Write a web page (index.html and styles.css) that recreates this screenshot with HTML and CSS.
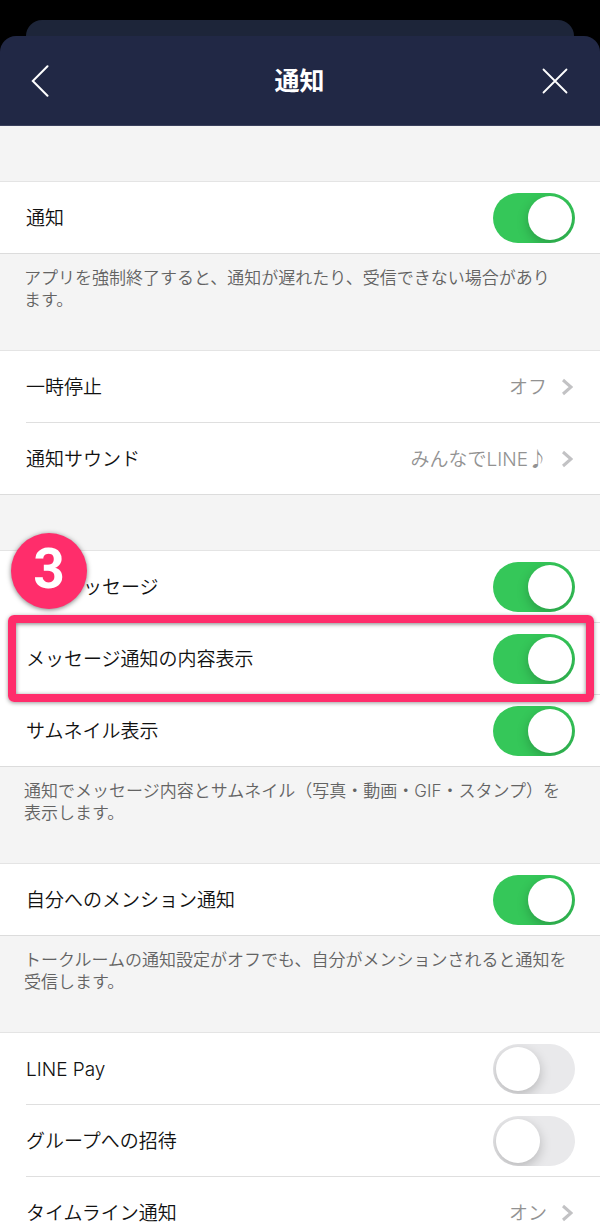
FILE: index.html
```
<!DOCTYPE html>
<html lang="ja">
<head>
  <meta charset="UTF-8" />
  <meta name="viewport" content="width=device-width, initial-scale=1.0"/>
  <title>通知</title>
  <link rel="stylesheet" href="styles.css">
</head>
<body>
  <div class="back-sheet"></div>

  <header>
    <button class="icon-btn" aria-label="戻る">
      <svg width="18" height="32" viewBox="0 0 18 32"><path d="M16.5 1.2 L1.8 16 L16.5 30.8"/></svg>
    </button>
    <h1>通知</h1>
    <button class="icon-btn close" aria-label="閉じる">
      <svg width="26" height="26" viewBox="0 0 26 26"><path d="M1.5 1.5 L24.5 24.5 M24.5 1.5 L1.5 24.5"/></svg>
    </button>
  </header>

  <main>
    <div class="spacer"></div>

    <section class="group">
      <div class="row">
        <label for="notify">通知</label>
        <input type="checkbox" class="switch" id="notify" checked>
      </div>
    </section>
    <p class="note">アプリを強制終了すると、通知が遅れたり、受信できない場合があり<br>ます。</p>

    <section class="group">
      <a class="row" href="#pause">
        <span>一時停止</span>
        <span class="value">オフ</span>
        <svg class="chevron" width="12" height="18" viewBox="0 0 12 18"><path d="M2 2 L10 9 L2 16"/></svg>
      </a>
      <a class="row" href="#sound">
        <span>通知サウンド</span>
        <span class="value">みんなでLINE♪</span>
        <svg class="chevron" width="12" height="18" viewBox="0 0 12 18"><path d="M2 2 L10 9 L2 16"/></svg>
      </a>
    </section>
    <div class="spacer"></div>

    <section class="group">
      <div class="row">
        <label for="message">新規メッセージ</label>
        <input type="checkbox" class="switch" id="message" checked>
      </div>
      <div class="row">
        <label for="preview">メッセージ通知の内容表示</label>
        <input type="checkbox" class="switch" id="preview" checked>
      </div>
      <div class="row">
        <label for="thumbnail">サムネイル表示</label>
        <input type="checkbox" class="switch" id="thumbnail" checked>
      </div>
      <div class="highlight"></div>
      <div class="step">3</div>
    </section>
    <p class="note">通知でメッセージ内容とサムネイル（写真・動画・GIF・スタンプ）を<br>表示します。</p>

    <section class="group">
      <div class="row">
        <label for="mention">自分へのメンション通知</label>
        <input type="checkbox" class="switch" id="mention" checked>
      </div>
    </section>
    <p class="note">トークルームの通知設定がオフでも、自分がメンションされると通知を<br>受信します。</p>

    <section class="group">
      <div class="row">
        <label for="pay">LINE Pay</label>
        <input type="checkbox" class="switch" id="pay">
      </div>
      <div class="row">
        <label for="invite">グループへの招待</label>
        <input type="checkbox" class="switch" id="invite">
      </div>
      <a class="row" href="#timeline">
        <span>タイムライン通知</span>
        <span class="value">オン</span>
        <svg class="chevron" width="12" height="18" viewBox="0 0 12 18"><path d="M2 2 L10 9 L2 16"/></svg>
      </a>
    </section>
  </main>
</body>
</html>
```
FILE: styles.css
```
* {
  box-sizing: border-box;
}

body {
  margin: 0;
  height: 100vh;
  display: flex;
  flex-direction: column;
  padding-top: 20px;
  background-color: #000;
  color: #111;
  font-family: Inter, "Noto Sans CJK JP", sans-serif;
  font-size: 19px;
  font-weight: 350;
}

/* edge of the screen behind the sheet */
.back-sheet {
  flex: none;
  height: 16px;
  margin: 0 26px;
  border-radius: 16px 16px 0 0;
  background-color: #1d2539;
}

header {
  flex: none;
  display: flex;
  align-items: center;
  justify-content: space-between;
  height: 90px;
  padding: 0 32px;
  padding-left: 31px;
  border-bottom: 1px solid #3a405c;
  border-radius: 16px 16px 0 0;
  background-color: #212845;
  color: #fff;
}

header h1 {
  margin: 0;
  font-size: 25px;
  line-height: 36px;
}

.icon-btn {
  display: flex;
  width: 26px;
  padding: 0;
  border: none;
  background: none;
  cursor: pointer;
}

.icon-btn svg {
  fill: none;
  stroke: #fff;
  stroke-width: 2;
  stroke-linecap: round;
}

.close svg {
  stroke-width: 1.8;
}

main {
  flex: 1;
  min-height: 0;
  overflow-y: auto;
  scrollbar-width: none;
  background-color: #f4f4f4;
}

.spacer {
  height: 56px;
  border-bottom: 1px solid #e4e4e4;
}

.group {
  position: relative;
  background-color: #fff;
  border-bottom: 1px solid #dcdcdc;
}

.row {
  display: flex;
  align-items: center;
  height: 72px;
  margin-left: 26px;
  padding-right: 25px;
  border-bottom: 1px solid #dfdfdf;
  color: #111;
  line-height: 28px;
  text-decoration: none;
}

.row:nth-last-child(1 of .row) {
  height: 71px;
  border-bottom: none;
}

.row label,
.row span {
  padding-top: 3px;
}

.value {
  margin-left: auto;
  color: #929292;
}

.chevron {
  margin: 0 2px 0 14px;
  fill: none;
  stroke: #c2c2c4;
  stroke-width: 3;
}

.note {
  height: 97px;
  margin: 0;
  padding: 13px 0 0 24px;
  border-bottom: 1px solid #e4e4e4;
  color: #636363;
  font-size: 17px;
  line-height: 22px;
  white-space: nowrap;
}

.switch {
  appearance: none;
  width: 82px;
  height: 50px;
  margin: 0 0 0 auto;
  padding: 3px;
  border-radius: 25px;
  background-color: #e9e9eb;
  overflow: hidden;
  cursor: pointer;
}

.switch::before {
  content: "";
  display: block;
  width: 44px;
  height: 44px;
  border-radius: 50%;
  background-color: #fff;
  box-shadow: 0 4px 12px rgba(0, 0, 0, 0.22);
}

.switch:checked {
  background-color: #35c759;
}

.switch:checked::before {
  margin-left: auto;
}

/* tutorial marks over the list */
.highlight {
  position: absolute;
  top: 64px;
  left: 8px;
  right: 6px;
  height: 87px;
  border: 8px solid #ff2d6b;
  border-radius: 6px;
  box-shadow: 0 1px 4px rgba(0, 0, 0, 0.4), inset 0 1px 4px rgba(0, 0, 0, 0.5);
  pointer-events: none;
}

.step {
  position: absolute;
  top: -18px;
  left: 11px;
  width: 76px;
  height: 76px;
  border-radius: 50%;
  background-color: #ff2d6b;
  box-shadow: 0 1px 5px rgba(0, 0, 0, 0.5);
  color: #fff;
  font-family: "Liberation Sans Narrow", Roboto, sans-serif;
  font-size: 55px;
  font-weight: 700;
  line-height: 72px;
  text-align: center;
}
```
